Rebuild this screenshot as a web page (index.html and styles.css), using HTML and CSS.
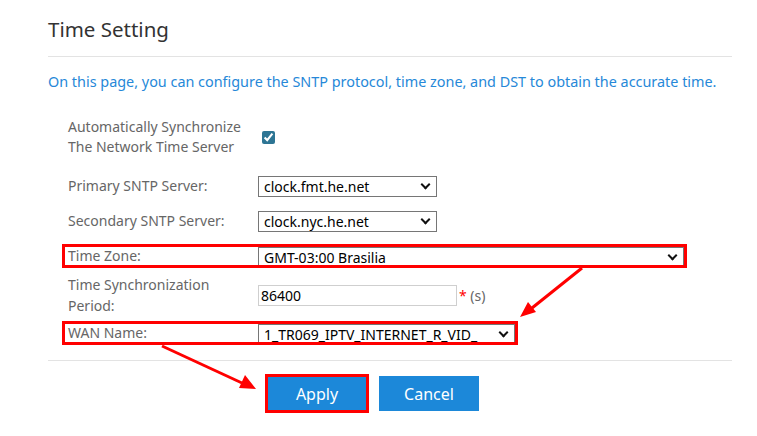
FILE: index.html
```html
<!DOCTYPE html>
<html lang="en">
<head>
    <meta charset="UTF-8">
    <meta name="viewport" content="width=device-width, initial-scale=1.0">
    <title>Time Setting</title>
    <link rel="stylesheet" href="styles.css">
</head>
<body>

    <div class="page">
        <h1 class="title">Time Setting</h1>
        <p class="intro">On this page, you can configure the SNTP protocol, time zone, and DST to obtain the accurate time.</p>

        <form action="time.do" class="form" id="timeForm">
            <div class="row row-sync">
                <label class="name" for="autoSync">Automatically Synchronize<br>The Network Time Server</label>
                <input type="checkbox" name="autoSync" id="autoSync" checked>
            </div>

            <div class="row row-primary">
                <label class="name" for="sntp1">Primary SNTP Server:</label>
                <span class="pick">
                    <select name="sntp1" id="sntp1" class="sel sel-short">
                        <option selected>clock.fmt.he.net</option>
                        <option>clock.nyc.he.net</option>
                        <option>pool.ntp.org</option>
                    </select>
                </span>
            </div>

            <div class="row row-second">
                <label class="name" for="sntp2">Secondary SNTP Server:</label>
                <span class="pick">
                    <select name="sntp2" id="sntp2" class="sel sel-short">
                        <option>clock.fmt.he.net</option>
                        <option selected>clock.nyc.he.net</option>
                        <option>pool.ntp.org</option>
                    </select>
                </span>
            </div>

            <!-- 표시된 줄 : 빨간 테두리 -->
            <div class="row row-zone marked">
                <label class="name" for="zone">Time Zone:</label>
                <span class="pick">
                    <select name="zone" id="zone" class="sel sel-long">
                        <option selected>GMT-03:00 Brasilia</option>
                        <option>GMT+00:00 London</option>
                    </select>
                </span>
            </div>

            <div class="row row-period">
                <label class="name" for="period">Time Synchronization<br>Period:</label>
                <input type="text" name="period" id="period" class="txt" value="86400">
                <span class="unit"><em>*</em> (s)</span>
            </div>

            <div class="row row-wan marked">
                <label class="name" for="wan">WAN Name:</label>
                <span class="pick">
                    <select name="wan" id="wan" class="sel sel-mid">
                        <option selected>1_TR069_IPTV_INTERNET_R_VID_</option>
                    </select>
                </span>
            </div>

            <div class="actions">
                <input type="submit" value="Apply" class="btn btn-apply">
                <input type="reset" value="Cancel" class="btn">
            </div>
        </form>

        <!-- 화살표 -->
        <svg class="arrows" width="757" height="436" viewBox="0 0 757 436">
            <line x1="582" y1="268" x2="532" y2="308" />
            <polygon points="520,317 528,302 536,312" />
            <line x1="162" y1="346" x2="242" y2="383" />
            <polygon points="256,389 239,388 245,375" />
        </svg>
    </div>

</body>
</html>
```

FILE: styles.css
```css
body{
    margin:0;
    font-family:"Noto Sans", "Liberation Sans", sans-serif;
    background-color:white;
}

.page{
    position:relative;
    width:684px;
    margin-left:48px;
    height:436px;
}

.title{
    margin:0;
    padding-top:15px;
    padding-bottom:13px;
    font-size:20.5px;
    line-height:28px;
    font-weight:normal;
    color:#333;
    border-bottom:1px solid #e3e3e3;
}

.intro{
    margin:15px 0 0 0;
    font-size:14.4px;
    line-height:20px;
    color:#2688d8;
}

.form{
    padding-left:20px;
}

.row{
    display:flex;
    align-items:center;
    width:fit-content;
}

.name{
    width:190px;
    flex-shrink:0;
    font-size:14px;
    line-height:20px;
    color:#666;
}

.row-sync{ margin-top:25px; }
.row-primary{ margin-top:18px; }
.row-second{ margin-top:14px; }
.row-zone{ margin-top:13px; }
.row-period{ margin-top:6px; }
.row-wan{ margin-top:5px; }

.row-period .name{
    line-height:21px;
}

/* 빨간 테두리 표시 (select 위에 그려지게 ::after로) */
.row.marked{
    position:relative;
    height:24px;
    margin-left:-6px;
    padding-left:6px;
    padding-right:3px;
}

.row.marked::after{
    content:"";
    position:absolute;
    left:0;
    top:0;
    right:0;
    bottom:0;
    border:3px solid #f00;
    pointer-events:none;
}

input[type=checkbox]{
    width:13px;
    height:13px;
    margin:3px 3px 3px 4px;
    accent-color:#2d7594;
}

.pick{
    position:relative;
    display:inline-block;
    height:21px;
}

.pick::after{
    content:"";
    position:absolute;
    right:8px;
    top:6px;
    width:5px;
    height:5px;
    border-right:2px solid #111;
    border-bottom:2px solid #111;
    transform:rotate(45deg);
    pointer-events:none;
}

.sel{
    appearance:none;
    -webkit-appearance:none;
    box-sizing:border-box;
    height:21px;
    margin:0;
    padding:0 20px 0 5px;
    border:1px solid #767676;
    border-radius:0;
    background-color:white;
    font-family:inherit;
    font-size:14px;
    color:#000;
}

.sel-short{ width:179px; }
.sel-long{ width:426px; }
.sel-mid{ width:257px; }

.txt{
    box-sizing:border-box;
    width:199px;
    height:21px;
    margin:0;
    padding:0 2px;
    border:1px solid #cfcfcf;
    font-family:inherit;
    font-size:14px;
    color:#000;
}

.unit{
    margin-left:2px;
    font-size:14px;
    color:#666;
}

.unit em{
    font-style:normal;
    color:#f00;
}

.actions{
    display:flex;
    gap:12px;
    margin:15px 0 0 -20px;
    padding:15px 0 0 219px;
    border-top:1px solid #e3e3e3;
}

.btn{
    width:100px;
    height:35px;
    margin:0;
    border:none;
    border-radius:0;
    background-color:#1c88d9;
    color:white;
    font-family:inherit;
    font-size:16px;
}

.btn-apply{
    outline:3px solid #f00;
    outline-offset:-1px;
}

.arrows{
    position:absolute;
    left:-48px;
    top:0;
    pointer-events:none;
}

.arrows line{
    stroke:#f00;
    stroke-width:3;
}

.arrows polygon{
    fill:#f00;
}
```
